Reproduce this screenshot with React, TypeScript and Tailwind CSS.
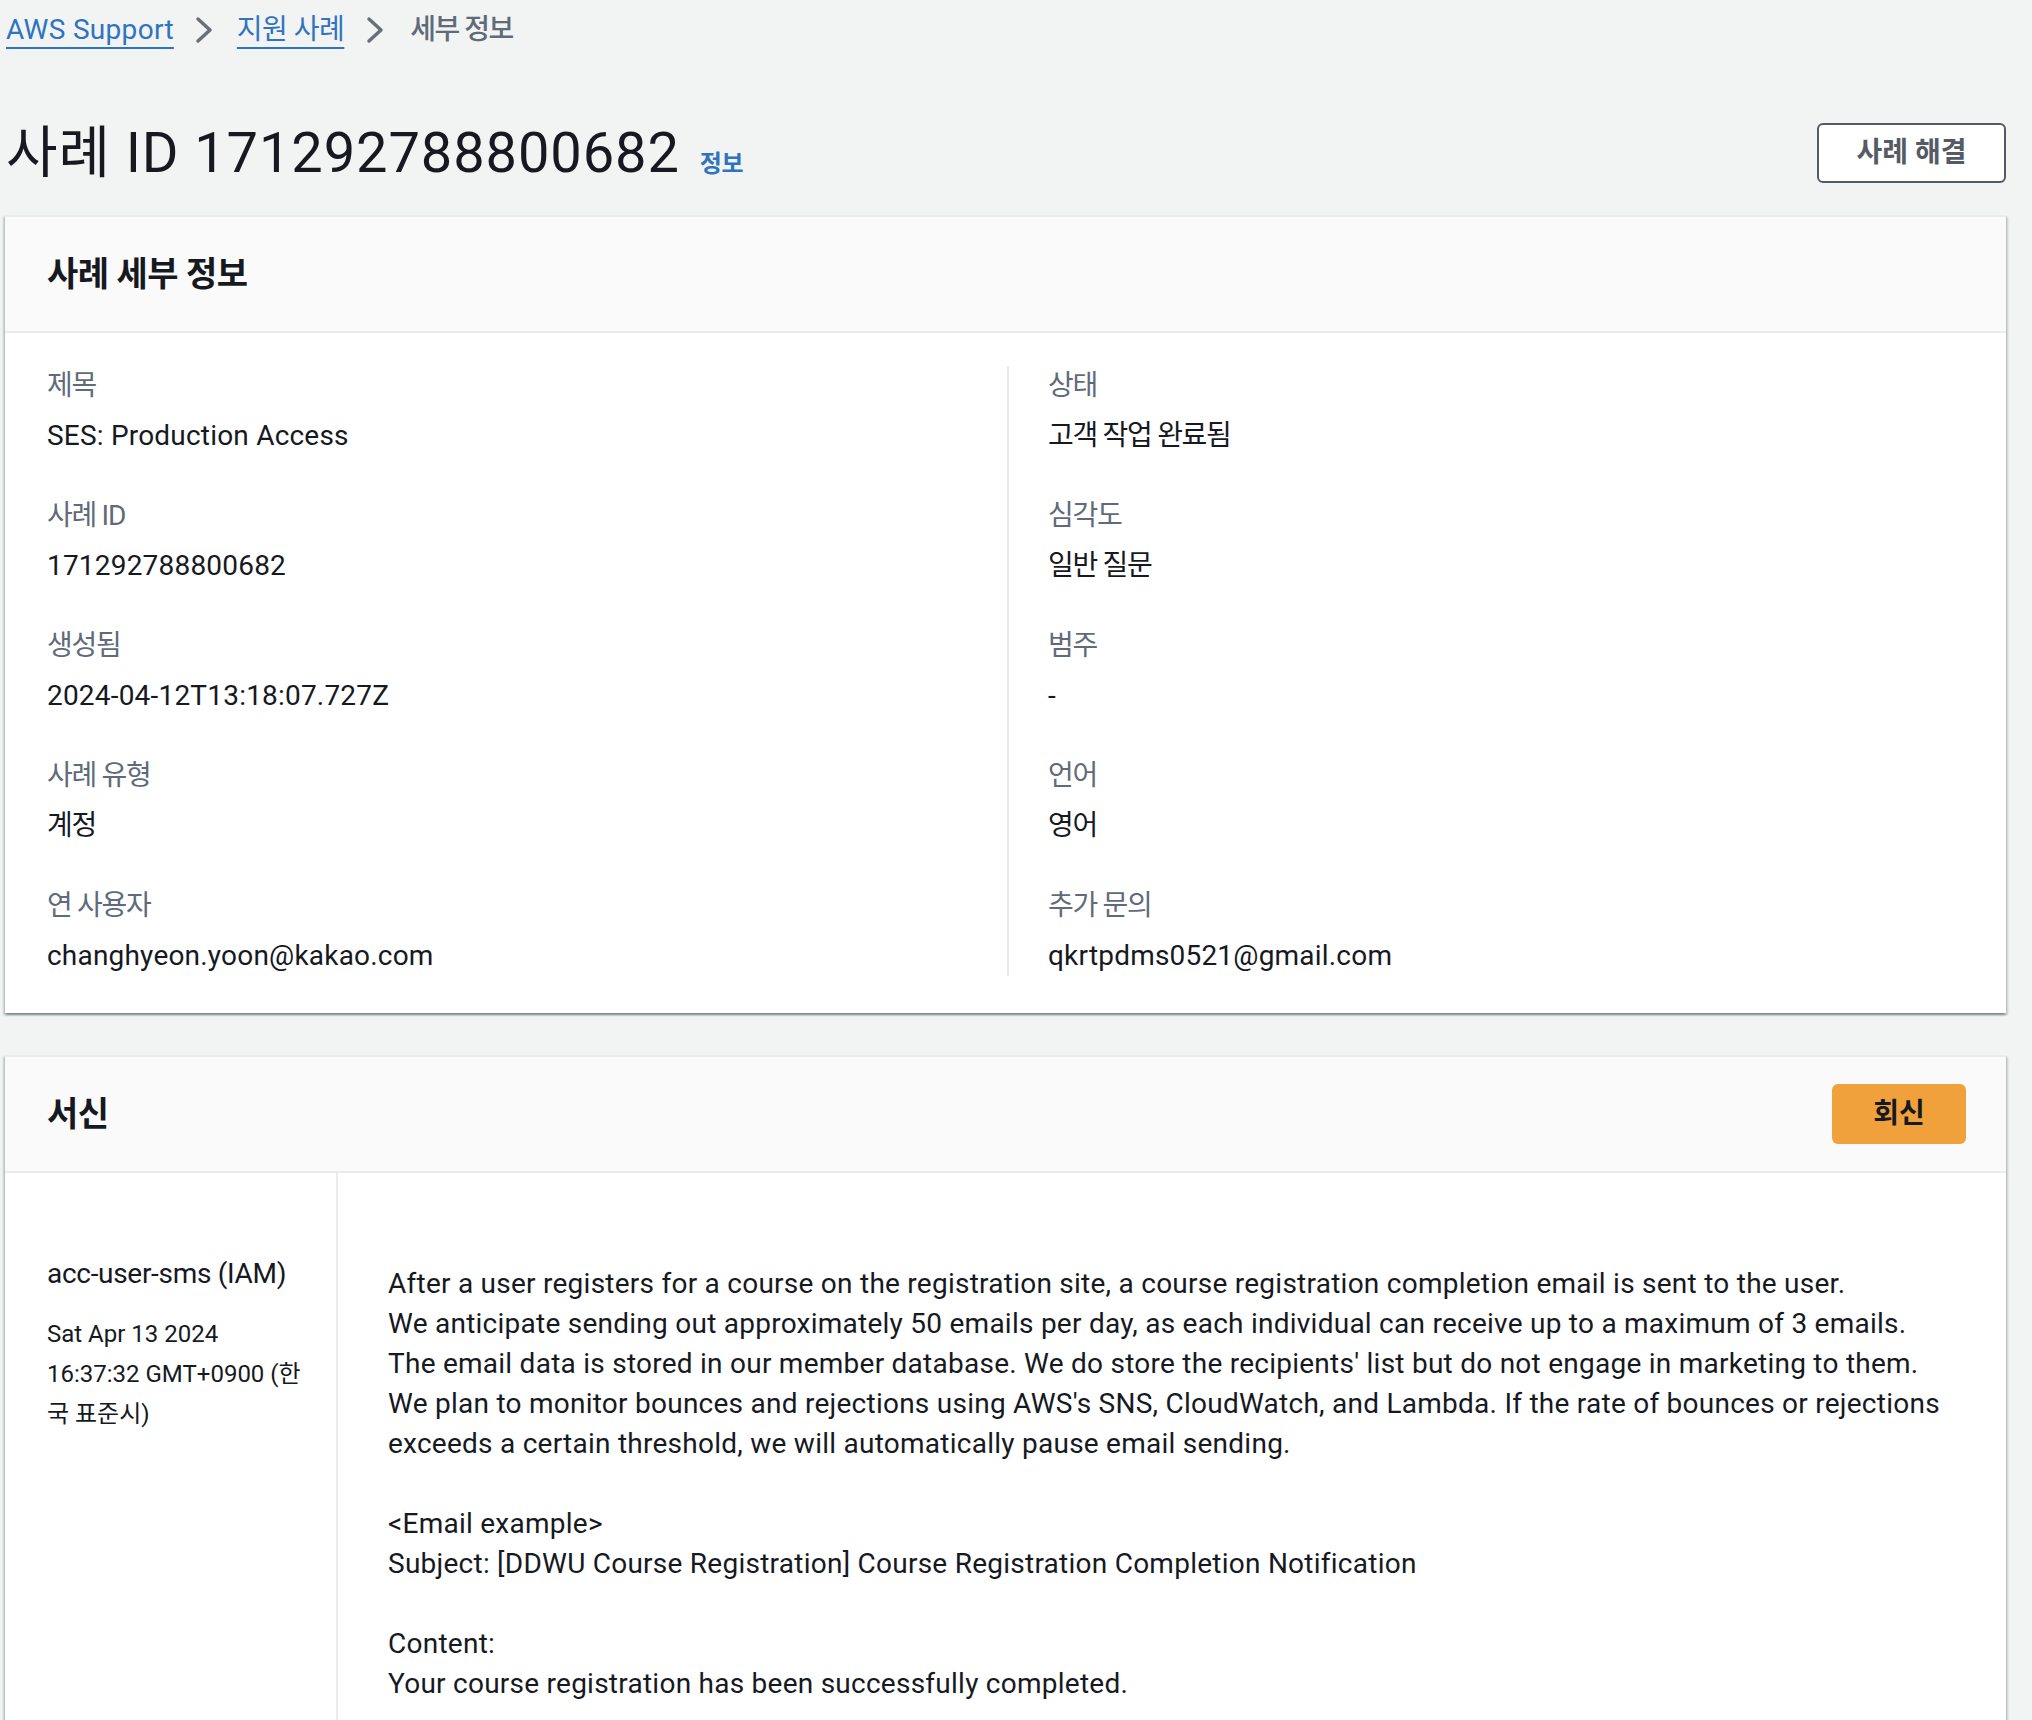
import React from 'react';

type Field = {
  label: string
  value: string
};

const leftFields: Field[] = [
  { label: '제목', value: 'SES: Production Access' },
  { label: '사례 ID', value: '171292788800682' },
  { label: '생성됨', value: '2024-04-12T13:18:07.727Z' },
  { label: '사례 유형', value: '계정' },
  { label: '연 사용자', value: 'changhyeon.yoon@kakao.com' },
];

const rightFields: Field[] = [
  { label: '상태', value: '고객 작업 완료됨' },
  { label: '심각도', value: '일반 질문' },
  { label: '범주', value: '-' },
  { label: '언어', value: '영어' },
  { label: '추가 문의', value: 'qkrtpdms0521@gmail.com' },
];

const messageLines: string[] = [
  'After a user registers for a course on the registration site, a course registration completion email is sent to the user.',
  'We anticipate sending out approximately 50 emails per day, as each individual can receive up to a maximum of 3 emails.',
  "The email data is stored in our member database. We do store the recipients' list but do not engage in marketing to them.",
  "We plan to monitor bounces and rejections using AWS's SNS, CloudWatch, and Lambda. If the rate of bounces or rejections",
  'exceeds a certain threshold, we will automatically pause email sending.',
  '',
  '<Email example>',
  'Subject: [DDWU Course Registration] Course Registration Completion Notification',
  '',
  'Content:',
  'Your course registration has been successfully completed.',
  '',
];

const isKorean = (s: string) => /[\uac00-\ud7a3]/.test(s);

const Chevron: React.FC<{ className: string }> = ({ className }) => (
  <svg width="18" height="30" viewBox="0 0 18 30" fill="none" className={className}>
    <polyline points="3,4 15,15 3,26" stroke="#687078" strokeWidth="3.5" strokeLinecap="round" strokeLinejoin="round" />
  </svg>
);

const FieldList: React.FC<{ fields: Field[] }> = ({ fields }) => (
  <div className="flex flex-col gap-[40px]">
    {fields.map((f) => (
      <div key={f.label}>
        <div className="text-[28px] leading-[40px] tracking-[-1.3px] text-[#5f6b7a]">{f.label}</div>
        <div
          className={
            isKorean(f.value)
              ? 'mt-[10px] text-[28px] leading-[40px] tracking-[-1.3px] text-[#16191f]'
              : 'mt-[10px] text-[28px] leading-[40px] tracking-[0.2px] text-[#16191f]'
          }
        >
          {f.value}
        </div>
      </div>
    ))}
  </div>
);

const panelClass =
  'bg-white border-t-2 border-[#e9ebed] shadow-[0_2px_2px_0_rgba(0,28,36,0.3),2px_2px_2px_0_rgba(0,28,36,0.15),-2px_2px_2px_0_rgba(0,28,36,0.15)]';

export default function App() {
  return (
    <div className="min-h-screen bg-[#f2f3f3] pl-[5px] pr-[26px] font-['Roboto','Noto_Sans_CJK_KR',sans-serif] text-[#16191f]">
      {/* breadcrumb */}
      <nav className="flex h-[60px] items-center pl-[1px] text-[28px]">
        <a className="tracking-[0.3px] text-[#2f74c0] underline decoration-2 underline-offset-[8px]">AWS Support</a>
        <Chevron className="ml-[21px] mr-[24px]" />
        <a className="tracking-[-0.5px] text-[#2f74c0] underline decoration-2 underline-offset-[8px]">지원 사례</a>
        <Chevron className="ml-[22px] mr-[26px]" />
        <span className="font-medium tracking-[-1.5px] text-[#5f6b7a]">세부 정보</span>
      </nav>

      {/* page header */}
      <div className="mt-[38px] flex h-[110px] items-center justify-between pl-[1px]">
        <div className="flex items-baseline">
          <h1 className="text-[56px] leading-[72px] tracking-[0.9px] text-[#16191f]">사례 ID 171292788800682</h1>
          <a className="ml-[20px] text-[24px] font-bold tracking-[-0.5px] text-[#2f74c0]">정보</a>
        </div>
        <button
          type="button"
          className="h-[60px] w-[189px] rounded-[6px] border-2 border-[#545b64] bg-white text-[28px] font-bold text-[#545b64]"
        >
          사례 해결
        </button>
      </div>

      {/* case details */}
      <section className={`mt-[7px] ${panelClass}`}>
        <div className="flex h-[116px] items-center border-b-2 border-[#e9ebed] bg-[#fafafa] px-[42px]">
          <h2 className="text-[34px] font-bold tracking-[-0.5px] text-[#16191f]">사례 세부 정보</h2>
        </div>
        <div className="flex px-[42px] pb-[37px] pt-[33px]">
          <div className="w-[960px] shrink-0">
            <FieldList fields={leftFields} />
          </div>
          <div className="flex-1 border-l-2 border-[#e9ebed] pl-[39px]">
            <FieldList fields={rightFields} />
          </div>
        </div>
      </section>

      {/* correspondence */}
      <section className={`mt-[42px] ${panelClass}`}>
        <div className="flex h-[116px] items-center justify-between border-b-2 border-[#e9ebed] bg-[#fafafa] pl-[42px] pr-[40px]">
          <h2 className="text-[34px] font-bold tracking-[-0.5px] text-[#16191f]">서신</h2>
          <button
            type="button"
            className="h-[60px] w-[134px] rounded-[6px] bg-[#f1a13b] text-[28px] font-bold text-[#16191f]"
          >
            회신
          </button>
        </div>
        <div className="flex">
          <div className="w-[333px] shrink-0 border-r-2 border-[#e9ebed] pl-[42px] pr-[20px] pt-[81px]">
            <div className="whitespace-nowrap text-[28px] leading-[40px] tracking-[-0.3px]">acc-user-sms (IAM)</div>
            <div className="mt-[20px] whitespace-nowrap text-[24px] leading-[40px]">
              Sat Apr 13 2024
              <br />
              16:37:32 GMT+0900 (한
              <br />
              국 표준시)
            </div>
          </div>
          <div className="flex-1 pl-[50px] pr-[40px] pt-[91px] pb-[40px]">
            {messageLines.map((line, i) => (
              <div key={i} className="h-[40px] whitespace-nowrap text-[28px] leading-[40px] tracking-[0.25px]">
                {line}
              </div>
            ))}
          </div>
        </div>
      </section>
    </div>
  );
}
